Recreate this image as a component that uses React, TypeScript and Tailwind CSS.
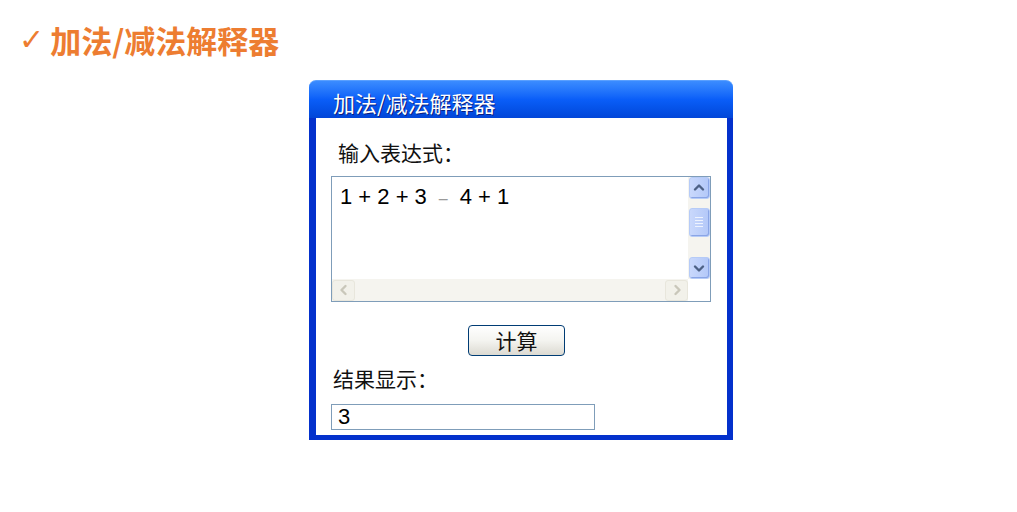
const serif = { fontFamily: '"Noto Sans CJK SC", sans-serif' };

function ArrowIcon({ dir, color }: { dir: "up" | "down" | "left" | "right"; color: string }) {
  const paths = {
    up: "M3 8.5 L7 4.5 L11 8.5",
    down: "M3 5.5 L7 9.5 L11 5.5",
    left: "M8.5 3 L4.5 7 L8.5 11",
    right: "M5.5 3 L9.5 7 L5.5 11",
  };
  return (
    <svg width="14" height="14" viewBox="0 0 14 14">
      <path d={paths[dir]} fill="none" stroke={color} strokeWidth="2.4" strokeLinecap="round" strokeLinejoin="round" />
    </svg>
  );
}

function VScrollBtn({ dir }: { dir: "up" | "down" }) {
  return (
    <div className="h-[22px] w-[21px] rounded-[3px] border border-[#b6cbf7] bg-gradient-to-r from-[#c9d8fc] to-[#b3c8f8] flex items-center justify-center shadow-[inset_-1px_-1px_0_#8aa5e6]">
      <ArrowIcon dir={dir} color="#4d6185" />
    </div>
  );
}

function HScrollBtn({ dir }: { dir: "left" | "right" }) {
  return (
    <div className="h-[21px] w-[23px] rounded-[3px] border border-[#e8e6dc] bg-[#f2f1ea] flex items-center justify-center">
      <ArrowIcon dir={dir} color="#c9c7ba" />
    </div>
  );
}

export default function App() {
  return (
    <div className="w-[1017px] h-[512px] bg-white overflow-hidden">
      <div className="flex items-center pl-[19px] pt-[21px] h-[58px]">
        <span className="text-[#ed7d31] text-[30px] leading-none mr-[6px]" style={{ fontFamily: '"DejaVu Sans", sans-serif' }}>✓</span>
        <span className="text-[#ed7d31] text-[31px] font-bold leading-none" style={{ fontFamily: '"Noto Sans CJK SC", sans-serif' }}>加法/减法解释器</span>
      </div>

      <div className="ml-[309px] mt-[22px] w-[424px] h-[360px] flex flex-col">
        <div className="h-[38px] rounded-t-[7px] bg-gradient-to-b from-[#3b8cff] via-[#0a5ef8] to-[#0246d8] border-t border-[#5aa0ff] flex items-center pl-[24px] pt-[4px]">
          <span className="text-white text-[22px] leading-none [text-shadow:1px_1px_0_#0a1f80]" style={serif}>加法/减法解释器</span>
        </div>
        <div className="flex-1 flex flex-col bg-white border-l-[7px] border-r-[6px] border-b-[5px] border-[#0431cc]">
          <div className="ml-[22px] mt-[22px] text-[21px] leading-[24px] text-[#111]" style={serif}>输入表达式：</div>

          <div className="ml-[15px] mt-[12px] w-[380px] h-[126px] border border-[#7f9db9] flex flex-col">
            <div className="flex flex-1">
              <div className="flex-1 pl-[8px] pt-[6px] text-[22px] leading-[28px] text-black" style={{ fontFamily: '"Liberation Sans", sans-serif' }}>
                1 + 2 + 3<span className="text-[#9a9a9a] mx-[12px] text-[16px]">–</span>4 + 1
              </div>
              <div className="w-[22px] bg-[#f5f4ef] flex flex-col justify-between items-center">
                <VScrollBtn dir="up" />
                <div className="h-[29px] w-[21px] rounded-[3px] border border-[#b6cbf7] bg-gradient-to-r from-[#c9d8fc] to-[#b3c8f8] flex items-center justify-center mb-[12px] shadow-[inset_-1px_-1px_0_#8aa5e6]">
                  <div className="flex flex-col gap-[2px]">
                    <div className="w-[8px] h-px bg-[#eef3fe]" />
                    <div className="w-[8px] h-px bg-[#eef3fe]" />
                    <div className="w-[8px] h-px bg-[#eef3fe]" />
                    <div className="w-[8px] h-px bg-[#eef3fe]" />
                  </div>
                </div>
                <VScrollBtn dir="down" />
              </div>
            </div>
            <div className="flex h-[22px]">
              <div className="flex-1 bg-[#f5f4ef] flex justify-between items-center">
                <HScrollBtn dir="left" />
                <HScrollBtn dir="right" />
              </div>
              <div className="w-[22px] bg-white" />
            </div>
          </div>

          <div className="ml-[152px] mt-[23px] w-[97px] h-[31px] rounded-[4px] border border-[#003c74] bg-gradient-to-b from-white via-[#f4f4f0] to-[#dcdad2] flex items-center justify-center text-[21px] text-[#111]" style={serif}>
            计算
          </div>

          <div className="ml-[17px] mt-[10px] text-[21px] leading-[24px] text-[#111]" style={serif}>结果显示：</div>

          <div className="ml-[15px] mt-[14px] w-[264px] h-[26px] border border-[#7f9db9] pl-[6px] text-[22px] leading-[24px] text-black" style={{ fontFamily: '"Liberation Sans", sans-serif' }}>
            3
          </div>
        </div>
      </div>
    </div>
  );
}
